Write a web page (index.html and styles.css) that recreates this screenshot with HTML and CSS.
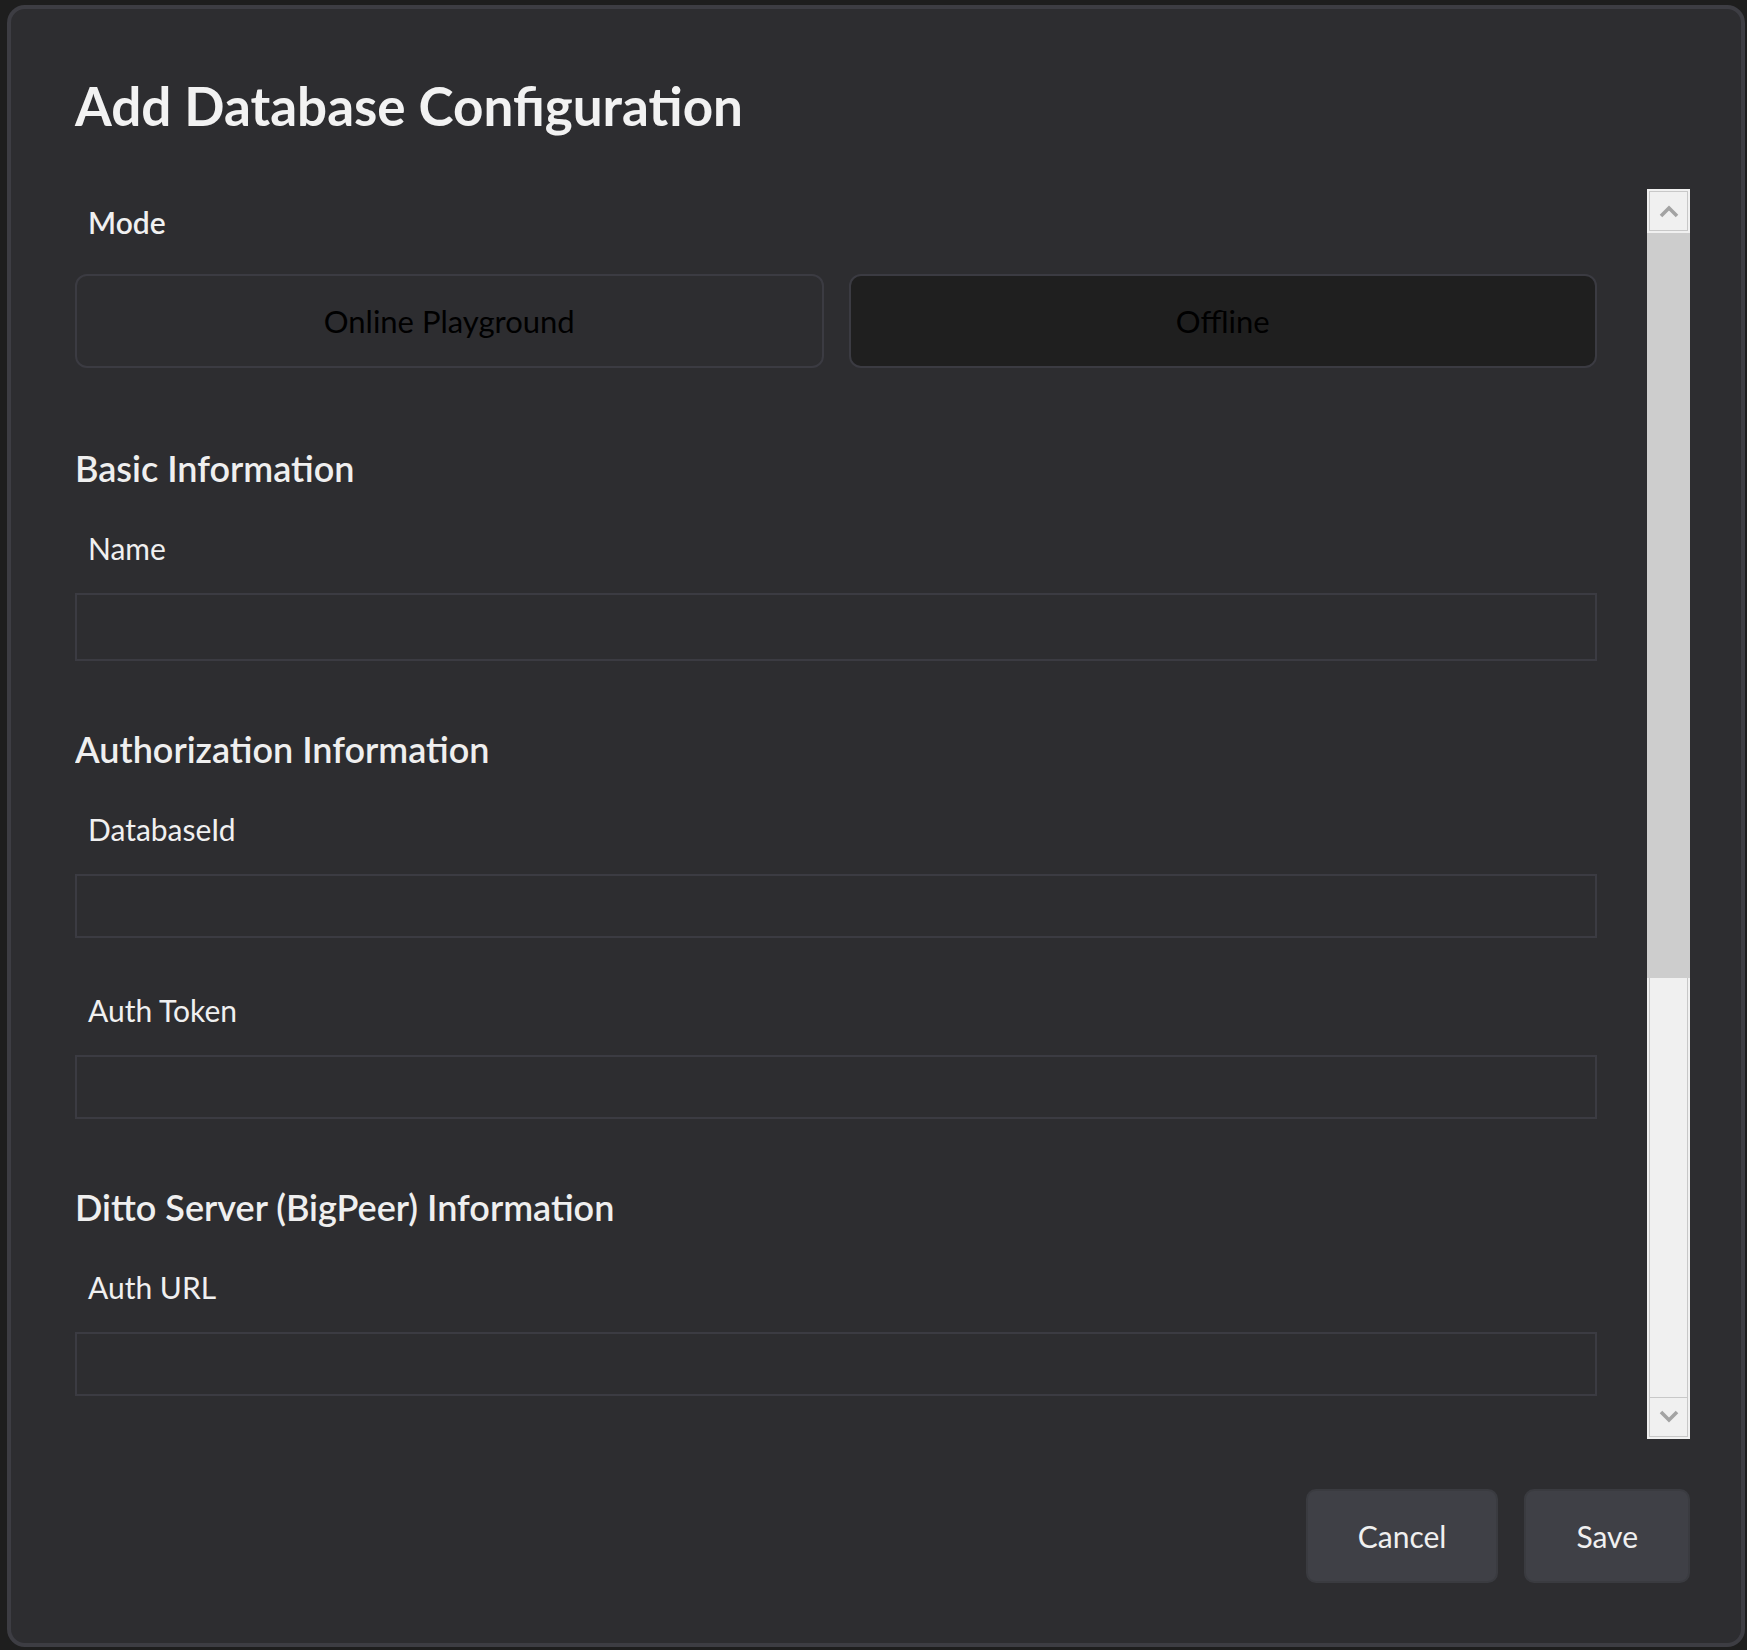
FILE: index.html
```html
<!DOCTYPE html>
<html lang="en">
<head>
<meta charset="utf-8">
<title>Add Database Configuration</title>
<link rel="stylesheet" href="styles.css">
</head>
<body>
<div class="dialog">
  <h1 class="title">Add Database Configuration</h1>
  <div class="scroll-area">
    <div class="scroll-content">
      <div class="field-label mode-label">Mode</div>
      <div class="mode-row">
        <button class="mode-btn">Online Playground</button>
        <button class="mode-btn selected">Offline</button>
      </div>

      <section class="section">
        <h2 class="section-title">Basic Information</h2>
        <div class="field">
          <label class="field-label">Name</label>
          <div class="input tall"></div>
        </div>
      </section>

      <section class="section">
        <h2 class="section-title">Authorization Information</h2>
        <div class="field">
          <label class="field-label">DatabaseId</label>
          <div class="input"></div>
        </div>
        <div class="field">
          <label class="field-label">Auth Token</label>
          <div class="input"></div>
        </div>
      </section>

      <section class="section">
        <h2 class="section-title">Ditto Server (BigPeer) Information</h2>
        <div class="field">
          <label class="field-label">Auth URL</label>
          <div class="input"></div>
        </div>
      </section>
    </div>
    <div class="scrollbar">
      <div class="sb-btn">
        <svg width="20" height="14" viewBox="0 0 20 14"><polyline points="2,12 10,4 18,12" fill="none" stroke="#a3a3a3" stroke-width="3.6"/></svg>
      </div>
      <div class="sb-thumb"></div>
      <div class="sb-track"></div>
      <div class="sb-btn down">
        <svg width="20" height="14" viewBox="0 0 20 14"><polyline points="2,2 10,10 18,2" fill="none" stroke="#a3a3a3" stroke-width="3.6"/></svg>
      </div>
    </div>
  </div>
  <div class="footer">
    <button class="action-btn">Cancel</button>
    <button class="action-btn">Save</button>
  </div>
</div>
</body>
</html>
```
FILE: styles.css
```css
* { box-sizing: border-box; }

html, body {
  margin: 0;
  background: #1e1e1e;
}

body {
  height: 1650px;
  padding: 5px 2px 3px 7px;
  font-family: Lato, "Open Sans", sans-serif;
}

.dialog {
  height: 100%;
  background: #2d2d30;
  border: 4px solid #3d3d43;
  border-radius: 18px;
  padding: 67px 51px 60px 64px;
  display: flex;
  flex-direction: column;
}

.title {
  margin: 0 0 53px 0;
  font-size: 53px;
  line-height: 60px;
  font-weight: 700;
  color: #f2f2f2;
}

.scroll-area {
  height: 1250px;
  display: flex;
  gap: 50px;
}

.scroll-content {
  flex: 1;
  overflow: hidden;
  padding-top: 15px;
}

.field-label {
  display: block;
  padding-left: 13px;
  font-size: 30px;
  line-height: 36px;
  color: #f0f0f0;
  margin-bottom: 27px;
}

.mode-label {
  font-weight: 600;
  margin-bottom: 34px;
}

.mode-row {
  display: grid;
  grid-template-columns: 1fr 1fr;
  gap: 25px;
}

.mode-btn {
  height: 94px;
  border: 2px solid #3b3b42;
  border-radius: 12px;
  background: #2d2d30;
  color: #000000;
  font-family: inherit;
  font-size: 31px;
  padding: 0;
}

.mode-btn.selected {
  background: #1f1f1f;
}

.section {
  margin-top: 67px;
}

.section:first-of-type {
  margin-top: 79px;
}

.section-title {
  margin: 0 0 41px 0;
  font-size: 36px;
  line-height: 42px;
  font-weight: 600;
  color: #efefef;
}

.field + .field {
  margin-top: 54px;
}

.input {
  height: 64px;
  border: 2px solid #3b3b42;
  background: #2d2d30;
}

.input.tall {
  height: 68px;
}

.scrollbar {
  width: 43px;
  background: #f0f0f0;
  display: flex;
  flex-direction: column;
}

.sb-btn {
  height: 40px;
  margin: 2px 2px 2px 2px;
  border: 1px solid #c8c8c8;
  display: flex;
  align-items: center;
  justify-content: center;
}

.sb-btn.down {
  margin-top: 0;
}

.sb-thumb {
  height: 745px;
  background: #cdcdcd;
}

.sb-track {
  flex: 1;
  margin: 0 2px;
  border-left: 1px solid #c8c8c8;
  border-right: 1px solid #c8c8c8;
}

.footer {
  margin-top: 50px;
  display: flex;
  justify-content: flex-end;
  gap: 26px;
}

.action-btn {
  height: 94px;
  padding: 0 50px;
  background: #3f4046;
  border: 2px solid #3a3b40;
  border-radius: 10px;
  color: #f0f0f0;
  font-family: inherit;
  font-size: 30px;
}
```
